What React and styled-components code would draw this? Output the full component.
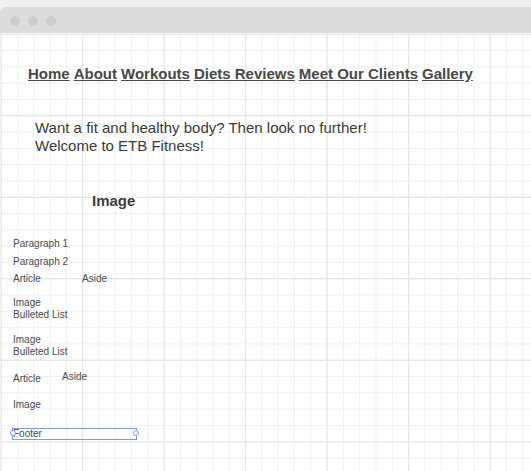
import styled, { createGlobalStyle } from "styled-components";

const GlobalStyle = createGlobalStyle`
  html, body {
    margin: 0;
    padding: 0;
    background: #efefef;
  }
  body {
    font-family: "Liberation Sans", Arial, sans-serif;
  }
`;

const navLinks = ["Home", "About", "Workouts", "Diets Reviews", "Meet Our Clients", "Gallery"];

export default function App() {
  return (
    <>
      <GlobalStyle />
      <Window>
        <TitleBar>
          <Dot />
          <Dot />
          <Dot />
        </TitleBar>
        <Canvas>
          <Nav>
            {navLinks.map((l) => (
              <NavLink key={l} href="#">
                {l}
              </NavLink>
            ))}
          </Nav>
          <Hero>
            Want a fit and healthy body? Then look no further!
            <br />
            Welcome to ETB Fitness!
          </Hero>
          <ImageHeading>Image</ImageHeading>
          <Blocks>
            <Small $gap={1}>Paragraph 1</Small>
            <Small $gap={5.6}>Paragraph 2</Small>
            <Row $gap={4.9} $asideAt={69}>
              <Small>Article</Small>
              <Small>Aside</Small>
            </Row>
            <Group $gap={12}>
              <Small>Image</Small>
              <Small>Bulleted List</Small>
            </Group>
            <Group $gap={13.5}>
              <Small>Image</Small>
              <Small>Bulleted List</Small>
            </Group>
            <Row $gap={13} $asideAt={49}>
              <Small $drop={2}>Article</Small>
              <Small>Aside</Small>
            </Row>
            <Small $gap={14}>Image</Small>
            <FooterBox>
              <Handle $side="left" />
              Footer
              <Handle $side="right" />
            </FooterBox>
          </Blocks>
        </Canvas>
      </Window>
    </>
  );
}

const Window = styled.div`
  min-height: 100vh;
  display: flex;
  flex-direction: column;
  padding-top: 7px;
  box-sizing: border-box;
`;

const TitleBar = styled.div`
  height: 26px;
  background: #dcdcdc;
  border-top-left-radius: 6px;
  display: flex;
  align-items: center;
  gap: 8px;
  padding-left: 10px;
  padding-top: 1px;
  box-sizing: border-box;
`;

const Dot = styled.span`
  width: 10px;
  height: 10px;
  border-radius: 50%;
  background: #cdcdcd;
`;

const Canvas = styled.main`
  flex: 1;
  background-color: #fff;
  background-image: linear-gradient(#e3e3e3 1px, transparent 1px),
    linear-gradient(90deg, #e3e3e3 1px, transparent 1px),
    linear-gradient(#f0f0f0 1px, transparent 1px),
    linear-gradient(90deg, #f0f0f0 1px, transparent 1px);
  background-size: 81.5px 81.5px, 81.5px 81.5px, 16.3px 16.3px, 16.3px 16.3px;
  background-position: 0.7px 0.8px;
  padding-top: 32px;
  padding-bottom: 20px;
  color: #444;
`;

const Nav = styled.nav`
  padding-left: 28px;
  display: flex;
  gap: 4px;
  font-size: 15px;
  line-height: 17px;
  font-weight: bold;
`;

const NavLink = styled.a`
  color: #484848;
  text-decoration: underline;
  text-underline-offset: 1px;
`;

const Hero = styled.p`
  margin: 37.3px 0 0;
  padding-left: 35px;
  font-size: 15px;
  line-height: 17.3px;
  color: #3a3a3a;
`;

const ImageHeading = styled.h2`
  margin: 38.6px 0 0;
  padding-left: 92px;
  font-size: 15px;
  line-height: 17px;
  font-weight: bold;
  color: #3d3d3d;
`;

const Blocks = styled.section`
  margin-top: 28px;
  padding-left: 13px;
  display: flex;
  flex-direction: column;
  align-items: flex-start;
`;

const Small = styled.div`
  font-size: 10px;
  line-height: 12px;
  color: #4a4a4a;
  margin-top: ${(p) => p.$gap || 0}px;
  padding-top: ${(p) => p.$drop || 0}px;
`;

const Row = styled.div`
  display: grid;
  grid-template-columns: ${(p) => p.$asideAt}px auto;
  align-items: start;
  margin-top: ${(p) => p.$gap}px;
`;

const Group = styled.div`
  margin-top: ${(p) => p.$gap}px;
`;

const FooterBox = styled.div`
  position: relative;
  margin-top: 16.5px;
  margin-left: -1px;
  width: 123px;
  height: 10px;
  border: 1px solid #7d9bd9;
  font-size: 10px;
  line-height: 10px;
  color: #4a4a4a;
`;

const Handle = styled.span`
  position: absolute;
  top: 1.5px;
  ${(p) => (p.$side === "left" ? "left: -3px;" : "right: -3px;")}
  width: 6px;
  height: 6px;
  border-radius: 50%;
  border: 1px solid #7d9bd9;
  background: #fff;
  box-sizing: border-box;
`;
